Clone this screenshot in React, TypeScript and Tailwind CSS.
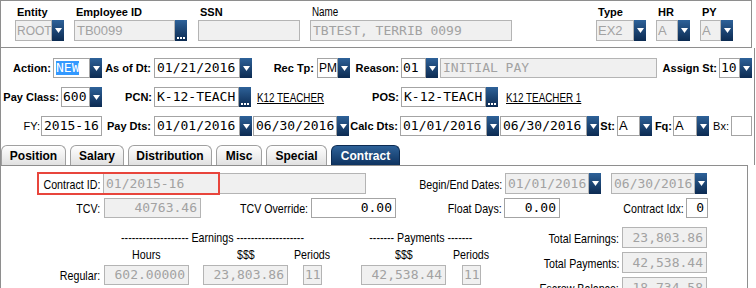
import React from "react";

const mono = "font-['DejaVu_Sans_Mono','Liberation_Mono',monospace]";
const navy = "bg-linear-to-b from-[#2e6299] to-[#0c2b52]";

function Dd() {
  return (
    <div className={`w-[12px] h-full shrink-0 flex items-center justify-center ${navy}`}>
      <svg width="7" height="5" viewBox="0 0 7 5">
        <path d="M0 0H7L3.5 5Z" fill="#fff" />
      </svg>
    </div>
  );
}

function Dots() {
  return (
    <div className={`w-[12px] h-full shrink-0 flex items-end justify-center pb-[2px] ${navy}`}>
      <svg width="8" height="2" viewBox="0 0 8 2">
        <rect x="0" y="0" width="2" height="2" fill="#fff" />
        <rect x="3" y="0" width="2" height="2" fill="#fff" />
        <rect x="6" y="0" width="2" height="2" fill="#fff" />
      </svg>
    </div>
  );
}

function In({
  w,
  children,
  off,
  right,
  sans,
  pad,
}: {
  w: string;
  children?: React.ReactNode;
  off?: boolean;
  right?: boolean;
  sans?: string;
  pad?: string;
}) {
  return (
    <div
      className={`${w} h-full shrink-0 border flex items-center overflow-hidden whitespace-nowrap ${
        off ? "bg-[#f0f0f0] border-[#b4b4b4] text-[#a2a2a2]" : "bg-white border-[#a4a4a4] text-black"
      } ${right ? "justify-end pr-[3px]" : pad ?? "pl-[2px]"} ${
        sans ? `font-['Liberation_Sans',sans-serif] ${sans}` : `${mono} text-[13px]`
      }`}
    >
      {children}
    </div>
  );
}

// bold form label, right aligned in a fixed box
function Lb({ w, children, thin }: { w: string; children: React.ReactNode; thin?: boolean }) {
  return (
    <div className={`${w} shrink-0 text-right text-[11px] whitespace-nowrap ${thin ? "" : "font-bold"}`}>
      {children}
    </div>
  );
}

// condensed look: 13px text squeezed horizontally
function Nl({ w, children }: { w: string; children: React.ReactNode }) {
  return (
    <div className={`${w} shrink-0 text-right whitespace-nowrap`}>
      <span className="inline-block origin-right scale-x-[0.82] text-[13px]">{children}</span>
    </div>
  );
}

function Ctr({ cls, children }: { cls: string; children: React.ReactNode }) {
  return (
    <div className={`${cls} flex justify-center whitespace-nowrap`}>
      <span className="inline-block origin-center scale-x-[0.82] text-[13px]">{children}</span>
    </div>
  );
}

function Link({ cls, children }: { cls: string; children: React.ReactNode }) {
  return (
    <div className={`${cls} shrink-0 whitespace-nowrap`}>
      <span className="inline-block origin-left scale-x-[0.82] text-[12px] underline">{children}</span>
    </div>
  );
}

function Head({ w, label, thin, children }: { w: string; label: string; thin?: boolean; children: React.ReactNode }) {
  return (
    <div className={`${w} shrink-0 flex flex-col`}>
      <div className="h-[15px] leading-[15px] pl-[2px] whitespace-nowrap">
        {thin ? (
          <span className="inline-block origin-left scale-x-[0.82] text-[12px]">{label}</span>
        ) : (
          <span className="text-[11px] font-bold">{label}</span>
        )}
      </div>
      <div className="mt-[2px] h-[21px] flex">{children}</div>
    </div>
  );
}

function Tab({ w, children, active }: { w: string; children: React.ReactNode; active?: boolean }) {
  return (
    <div
      className={`${w} h-[20px] shrink-0 rounded-t-[6px] border border-b-0 flex items-center justify-center text-[12px] font-bold ${
        active
          ? "border-[#0c2b52] bg-linear-to-b from-[#2e6299] to-[#0e3360] text-white"
          : "border-[#a0a0a0] bg-linear-to-b from-white to-[#e1e1e1] text-black"
      }`}
    >
      {children}
    </div>
  );
}

export default function App() {
  return (
    <div className="relative w-[756px] h-[288px] overflow-hidden bg-white text-black font-['Liberation_Sans',Arial,sans-serif]">
      {/* employee header */}
      <div className="w-[752px] h-[48px] border border-[#8e8e8e] flex pl-[14px] pt-[2px]">
        <Head w="w-[49px]" label="Entity">
          <In w="w-[37px]" off sans="text-[12px]" pad="pl-[1px]">ROOT</In>
          <Dd />
        </Head>
        <Head w="w-[114px] ml-[10px]" label="Employee ID">
          <In w="w-[101px]" off sans="text-[13px]">TB0099</In>
          <Dots />
        </Head>
        <Head w="w-[102px] ml-[10px]" label="SSN">
          <In w="w-[102px]" off />
        </Head>
        <Head w="w-[202px] ml-[10px]" label="Name" thin>
          <In w="w-[202px]" off>TBTEST, TERRIB 0099</In>
        </Head>
        <Head w="w-[50px] ml-[84px]" label="Type">
          <In w="w-[38px]" off sans="text-[13px]" pad="pl-[1px]">EX2</In>
          <Dd />
        </Head>
        <Head w="w-[34px] ml-[10px]" label="HR">
          <In w="w-[22px]" off sans="text-[13px]" pad="pl-[1px]">A</In>
          <Dd />
        </Head>
        <Head w="w-[33px] ml-[10px]" label="PY">
          <In w="w-[21px]" off sans="text-[13px]" pad="pl-[1px]">A</In>
          <Dd />
        </Head>
      </div>

      {/* assignment form + tabs */}
      <div className="w-[755px] h-[117px] border-x border-[#8e8e8e] flex flex-col">
        <div className="pt-[10px] flex flex-col gap-[9px]">
          <div className="flex items-center h-[20px]">
            <Lb w="w-[50px]">Action:</Lb>
            <div className="ml-[2px] h-full flex">
              <In w="w-[37px]">
                <span className="bg-[#3399ff] text-white leading-[14px]">NEW</span>
              </In>
              <Dd />
            </div>
            <Lb w="w-[49px]">As of Dt:</Lb>
            <div className="ml-[3px] h-full flex">
              <In w="w-[86px]">01/21/2016</In>
              <Dd />
            </div>
            <Lb w="w-[62px]">Rec Tp:</Lb>
            <div className="ml-[3px] h-full flex">
              <In w="w-[21px]" sans="text-[12px]" pad="pl-[1px]">PM</In>
              <Dd />
            </div>
            <Lb w="w-[49px]">Reason:</Lb>
            <div className="ml-[2px] h-full flex">
              <In w="w-[25px]" pad="pl-[1px]">01</In>
              <Dd />
            </div>
            <div className="ml-[2px] h-full flex">
              <In w="w-[217px]" off>INITIAL PAY</In>
            </div>
            <Lb w="w-[60px]">Assign St:</Lb>
            <div className="ml-[2px] h-full flex">
              <In w="w-[21px]" pad="pl-[1px]">10</In>
              <Dd />
            </div>
          </div>

          <div className="flex items-center h-[20px]">
            <Lb w="w-[58px]">Pay Class:</Lb>
            <div className="ml-[2px] h-full flex">
              <In w="w-[29px]" pad="pl-[1px]">600</In>
              <Dd />
            </div>
            <Lb w="w-[50px]">PCN:</Lb>
            <div className="ml-[2px] h-full flex">
              <In w="w-[85px]">K-12-TEACH</In>
              <Dots />
            </div>
            <Link cls="ml-[6px] w-[68px]">K12 TEACHER</Link>
            <Lb w="w-[74px]">POS:</Lb>
            <div className="ml-[2px] h-full flex">
              <In w="w-[85px]">K-12-TEACH</In>
              <Dots />
            </div>
            <Link cls="ml-[8px]">K12 TEACHER 1</Link>
          </div>

          <div className="flex items-center h-[20px]">
            <Lb w="w-[39px]" thin>FY:</Lb>
            <div className="ml-[1px] h-full flex">
              <In w="w-[61px]">2015-16</In>
            </div>
            <Lb w="w-[49px]">Pay Dts:</Lb>
            <div className="ml-[3px] h-full flex">
              <In w="w-[86px]">01/01/2016</In>
              <Dd />
            </div>
            <div className="ml-[1px] h-full flex">
              <In w="w-[84px]">06/30/2016</In>
              <Dd />
            </div>
            <Lb w="w-[49px]">Calc Dts:</Lb>
            <div className="ml-[2px] h-full flex">
              <In w="w-[87px]">01/01/2016</In>
              <Dd />
            </div>
            <div className="ml-[1px] h-full flex">
              <In w="w-[87px]">06/30/2016</In>
              <Dd />
            </div>
            <Lb w="w-[16px]">St:</Lb>
            <div className="ml-[2px] h-full flex">
              <In w="w-[23px]" sans="text-[13px]" pad="pl-[1px]">A</In>
              <Dd />
            </div>
            <Lb w="w-[20px]">Fq:</Lb>
            <div className="ml-[1px] h-full flex">
              <In w="w-[24px]" sans="text-[13px]" pad="pl-[1px]">A</In>
              <Dd />
            </div>
            <Lb w="w-[20px]" thin>Bx:</Lb>
            <div className="ml-[2px] h-full flex">
              <In w="w-[21px]" />
            </div>
          </div>
        </div>

        <div className="mt-[9px] h-[20px] flex gap-[4px]">
          <Tab w="w-[65px]">Position</Tab>
          <Tab w="w-[54px]">Salary</Tab>
          <Tab w="w-[84px]">Distribution</Tab>
          <Tab w="w-[46px]">Misc</Tab>
          <Tab w="w-[61px]">Special</Tab>
          <Tab w="w-[69px]" active>Contract</Tab>
        </div>
      </div>

      {/* contract panel */}
      <div className="w-[748px] h-[123px] border-x border-t border-[#8e8e8e] pt-[7px] flex flex-col">
        <div className="flex items-center h-[21px]">
          <Nl w="w-[99px]">Contract ID:</Nl>
          <div className="ml-[3px] h-full flex">
            <In w="w-[263px]" off>01/2015-16</In>
          </div>
          <Nl w="w-[136px]">Begin/End Dates:</Nl>
          <div className="ml-[3px] h-full flex">
            <In w="w-[84px]" off>01/01/2016</In>
            <Dd />
          </div>
          <div className="ml-[10px] h-full flex">
            <In w="w-[84px]" off>06/30/2016</In>
            <Dd />
          </div>
        </div>

        <div className="mt-[4px] flex items-center h-[20px]">
          <Nl w="w-[99px]">TCV:</Nl>
          <div className="ml-[4px] h-full flex">
            <In w="w-[97px]" off right>40763.46</In>
          </div>
          <Nl w="w-[107px]">TCV Override:</Nl>
          <div className="ml-[3px] h-full flex">
            <In w="w-[85px]" right>0.00</In>
          </div>
          <Nl w="w-[106px]">Float Days:</Nl>
          <div className="ml-[2px] h-full flex">
            <In w="w-[56px]" right>0.00</In>
          </div>
          <Nl w="w-[124px]">Contract Idx:</Nl>
          <div className="ml-[2px] h-full flex">
            <In w="w-[22px]" right>0</In>
          </div>
        </div>

        <div className="flex">
          <div className="w-[480px] shrink-0 pt-[13px] flex flex-col">
            <div className="h-[14px] leading-[14px] flex">
              <Ctr cls="ml-[103px] w-[218px]">------------------- Earnings -------------------</Ctr>
              <Ctr cls="ml-[39px] w-[120px]">------- Payments -------</Ctr>
            </div>
            <div className="mt-[3px] h-[14px] leading-[14px] flex">
              <Ctr cls="ml-[103px] w-[85px]">Hours</Ctr>
              <Ctr cls="ml-[14px] w-[85px]">$$$</Ctr>
              <Ctr cls="ml-[15px] w-[19px]">Periods</Ctr>
              <Ctr cls="ml-[39px] w-[85px]">$$$</Ctr>
              <Ctr cls="ml-[16px] w-[19px]">Periods</Ctr>
            </div>
            <div className="mt-[3px] h-[20px] flex items-center">
              <Nl w="w-[99px]">Regular:</Nl>
              <div className="ml-[4px] h-full flex">
                <In w="w-[85px]" off right>602.00000</In>
              </div>
              <div className="ml-[14px] h-full flex">
                <In w="w-[85px]" off right>23,803.86</In>
              </div>
              <div className="ml-[15px] h-full flex">
                <In w="w-[19px]" off pad="pl-[1px]">11</In>
              </div>
              <div className="ml-[39px] h-full flex">
                <In w="w-[85px]" off right>42,538.44</In>
              </div>
              <div className="ml-[16px] h-full flex">
                <In w="w-[19px]" off pad="pl-[1px]">11</In>
              </div>
            </div>
          </div>

          <div className="pt-[9px] flex flex-col gap-[4px]">
            {[
              ["Total Earnings:", "23,803.86"],
              ["Total Payments:", "42,538.44"],
              ["Escrow Balance:", "-18,734.58"],
            ].map(([label, value]) => (
              <div key={label} className="flex items-center h-[21px]">
                <Nl w="w-[138px]">{label}</Nl>
                <div className="ml-[3px] h-full flex">
                  <In w="w-[85px]" off right>{value}</In>
                </div>
              </div>
            ))}
          </div>
        </div>
      </div>

      {/* highlight box around contract id */}
      <div className="absolute left-[37px] top-[172px] w-[183px] h-[23px] border-2 border-[#e8453c]" />
    </div>
  );
}
